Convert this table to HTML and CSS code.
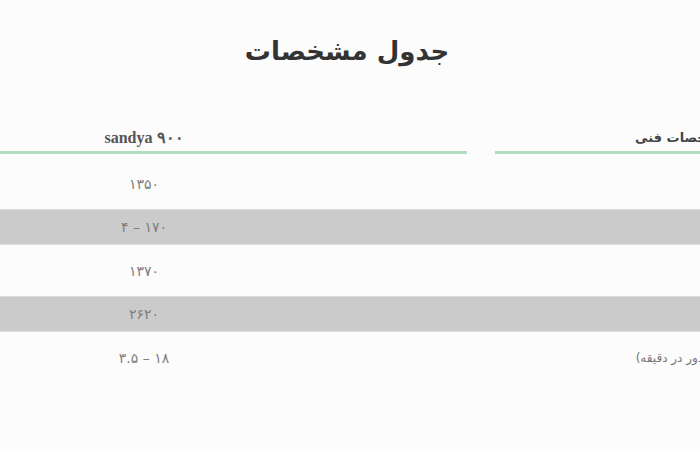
FILE: index.html
```html
<!DOCTYPE html>
<html lang="fa">
<head>
<meta charset="utf-8">
<title>جدول مشخصات</title>
<link rel="stylesheet" href="styles.css">
</head>
<body>
<div class="page">
  <h1 class="title">جدول مشخصات</h1>
  <div class="spec" dir="rtl">
    <div class="row head">
      <div class="cell label">مشخصات فنی</div>
      <div class="cell value"><span class="model">sandya ۹۰۰</span></div>
    </div>
    <div class="body">
      <div class="row">
        <div class="cell label">توان (وات)</div>
        <div class="cell value">۱۳۵۰</div>
      </div>
      <div class="row alt">
        <div class="cell label">ظرفیت برش</div>
        <div class="cell value">۱۷۰ – ۴</div>
      </div>
      <div class="row">
        <div class="cell label">وزن (گرم)</div>
        <div class="cell value">۱۳۷۰</div>
      </div>
      <div class="row alt">
        <div class="cell label">طول ضربه</div>
        <div class="cell value">۲۶۲۰</div>
      </div>
      <div class="row">
        <div class="cell label">سرعت بدون بار (دور در دقیقه)</div>
        <div class="cell value">۱۸ – ۳.۵</div>
      </div>
    </div>
  </div>
</div>
</body>
</html>
```
FILE: styles.css
```css
html, body {
  margin: 0;
  padding: 0;
  background: #fcfcfc;
  overflow: hidden;
}

.page {
  width: 700px;
  height: 450px;
  overflow: hidden;
  font-family: "DejaVu Sans", "Noto Sans", sans-serif;
}

.title {
  margin: 31px 0 0;
  line-height: 40px;
  font-size: 26px;
  font-weight: bold;
  color: #333;
  text-align: center;
  direction: rtl;
  padding-right: 6px;
}

.spec {
  width: 1048px;
  margin-left: -177px;
  margin-top: 49px;
  direction: rtl;
}

.row {
  display: flex;
  gap: 28px;
  height: 43px;
  align-items: center;
}

.cell.label {
  width: 376px;
  padding-right: 79px;
  box-sizing: border-box;
  text-align: right;
  white-space: nowrap;
  font-size: 12px;
  color: #777;
}

.cell.value {
  width: 644px;
  padding-right: 2px;
  box-sizing: border-box;
  text-align: center;
  font-size: 14px;
  color: #7d7d7d;
}

.row.head {
  height: auto;
  align-items: stretch;
}

.row.head .cell {
  padding-top: 8px;
  padding-bottom: 2px;
  line-height: 20px;
  border-bottom: 3px solid #b0dcc0;
  font-weight: bold;
  font-size: 13px;
  color: #444;
}

.row.head .cell.label {
  padding-right: 143px;
}

.model {
  font-family: "Liberation Serif", "DejaVu Serif", serif;
  font-size: 16px;
  color: #555;
}

.body {
  padding-top: 8px;
}

.row.alt {
  height: 36px;
  margin: 4px 0;
  background: #cbcbcb;
  border-top: 1px solid #dcdcdc;
  border-bottom: 1px solid #dcdcdc;
  box-sizing: border-box;
}
```
